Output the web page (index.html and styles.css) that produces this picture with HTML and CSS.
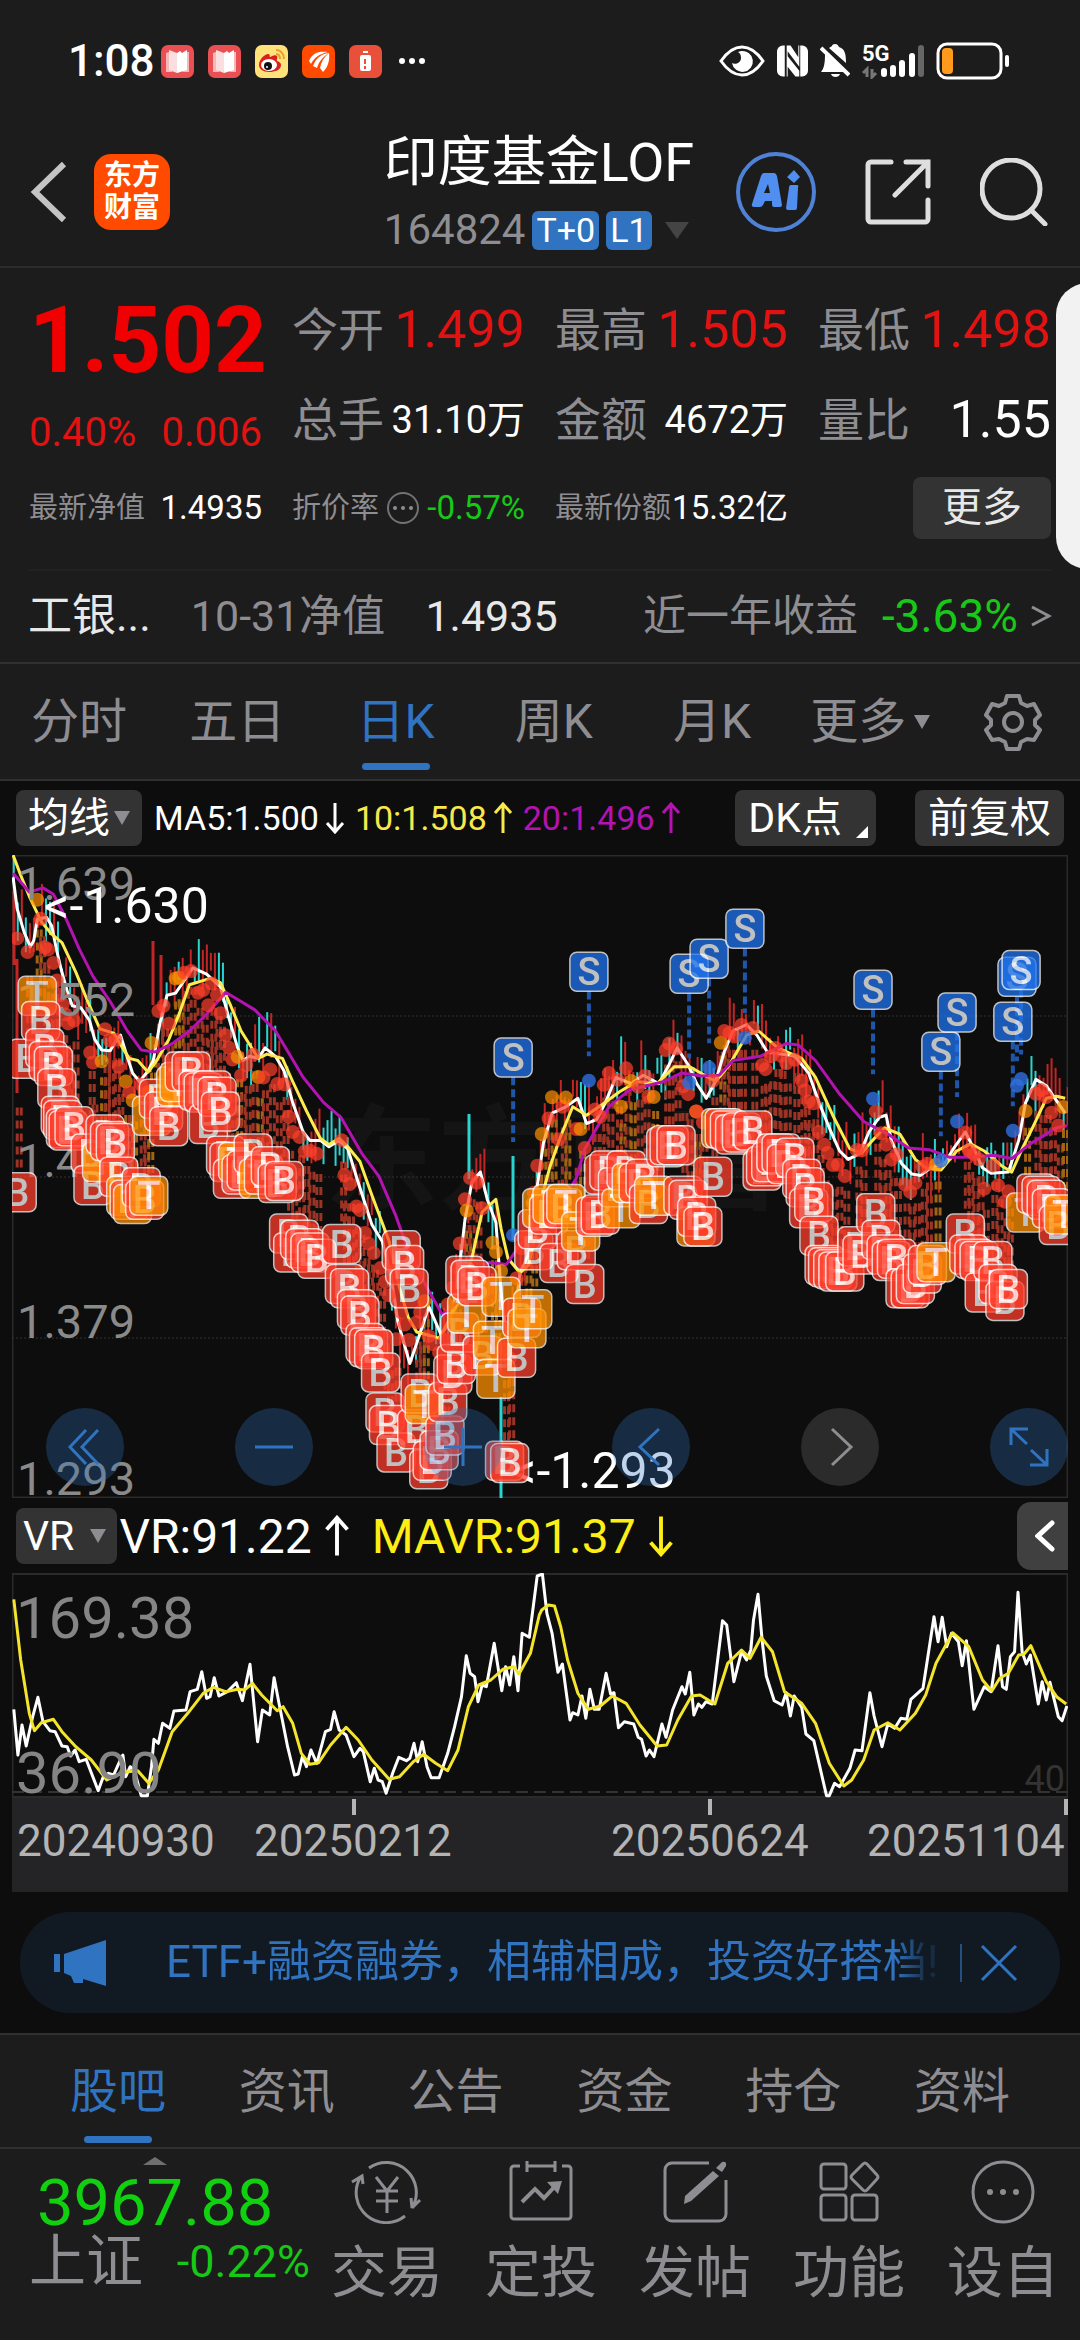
FILE: index.html
```html
<!DOCTYPE html>
<html lang="zh-CN">
  <head>
    <meta charset="UTF-8" />
    <meta name="viewport" content="width=device-width, initial-scale=1.0" />
    <title>印度基金LOF 164824</title>
    <link rel="stylesheet" href="styles.css">
  </head>
  <body>
    <!-- Shared arrows -->
    <svg class="sprite" aria-hidden="true">
      <symbol id="arrow-up" viewBox="0 0 20 32"><path d="M10 31V2M2 11l8-9 8 9" fill="none" stroke="currentColor" stroke-width="3" /></symbol>
      <symbol id="arrow-down" viewBox="0 0 20 32"><path d="M10 1v29M2 21l8 9 8-9" fill="none" stroke="currentColor" stroke-width="3" /></symbol>
      <symbol id="book" viewBox="0 0 33 33"><rect width="33" height="33" rx="7" fill="#ea4f54" /><path d="M5 8l6-2v21H5zM22 7h6v20h-6z" fill="#f8b8ba" /><path d="M8 5l8 3v20l-8-3z" fill="#fbdfe0" /><path d="M16 8l3-2 2 2 5-3v20l-10 3z" fill="#fff" /></symbol>
    </svg>

    <div class="status">
      <span class="time">1:08</span>
      <svg class="app"><use href="#book" /></svg>
      <svg class="app"><use href="#book" /></svg>
      <svg class="app" viewBox="0 0 33 33"><rect width="33" height="33" rx="7" fill="#ffe37a" /><path d="M4 20c0-6 6-11 9-11 3 0 1 3 2 3s5-3 7-1c1 2-1 4 0 5 3 1 4 2 4 4 0 5-6 7-12 7-6 0-10-3-10-7z" fill="#d9201f" /><ellipse cx="14" cy="20" rx="8" ry="6" fill="#fff" /><circle cx="13" cy="21" r="4" fill="#111" /><circle cx="12" cy="22" r="1" fill="#fff" /><path d="M21 5c5 0 8 4 8 9M21 9c3 0 4 2 4 5" fill="none" stroke="#e8a02c" stroke-width="2" /></svg>
      <svg class="app" viewBox="0 0 33 33"><rect width="33" height="33" rx="7" fill="#ff4a00" /><path d="M7 16C11 7 17 6 26 7 17 9 12 13 9 19zM11 21C14 13 19 9 27 8c-6 4-10 8-12 15zM18 23c1-6 4-11 9-15 1 7-1 14-6 19z" fill="#fff" /></svg>
      <svg class="app" viewBox="0 0 33 33"><rect width="33" height="33" rx="7" fill="#e8503a" /><path d="M14 6h5v2h-5zM13 10h7a2 2 0 0 1 2 2v12a2 2 0 0 1-2 2h-7a2 2 0 0 1-2-2V12a2 2 0 0 1 2-2z" fill="#fff" /><path d="M16 14v5M16 21v3" stroke="#e8503a" stroke-width="2" /></svg>
      <svg class="dots" viewBox="0 0 28 8"><circle cx="4" cy="4" r="3" /><circle cx="14" cy="4" r="3" /><circle cx="24" cy="4" r="3" /></svg>
      <span class="spacer"></span>
      <div class="status-right">
        <svg class="eye" viewBox="0 0 46 32"><path d="M2 16C9 6 16 2 23 2s14 4 21 14C37 26 30 30 23 30S9 26 2 16z" fill="none" stroke="#fff" stroke-width="3" /><path d="M22 6a10.500 10.500 0 1 1-9 12c3 2 9 0 9-5 0-3-1-5-3-6z" fill="#fff" /></svg>
        <svg class="nfc" viewBox="0 0 32 32"><path d="M6 0h2v32H6a6 6 0 0 1-6-6V6a6 6 0 0 1 6-6zM26 0a6 6 0 0 1 6 6v20a6 6 0 0 1-6 6h-2V0zM10 0h4l8 12V0h1v22L11 6v5l12 15v6h-4l-8-10v10h-1z" fill="#fff" /></svg>
        <svg class="bell" viewBox="0 0 30 34"><path d="M15 0c2 0 3 1 4 3 6 2 7 7 7 16L9 4c1-1 2-1 3-2 0-1 1-2 3-2zM5 10l19 18H1c3-4 4-8 4-18zM11 30h9c-1 4-8 4-9 0z" fill="#fff" /><path d="M1 4l28 27" stroke="#fff" stroke-width="4" /></svg>
        <span class="signal">
          <span class="net">5G</span>
          <svg viewBox="0 0 62 35"><path d="M1 29l4-4v8M10 25v8l4-4" stroke="#777" stroke-width="3" fill="none" /><g stroke="#fff" stroke-width="6" stroke-linecap="round"><path d="M22 27v3M31 24v6M40 19v11M50 12v18" /><path d="M59 4v26" stroke="#666" /></g></svg>
        </span>
        <svg class="battery" viewBox="0 0 74 38"><rect x="2" y="2" width="63" height="34" rx="9" fill="none" stroke="#fff" stroke-width="3" /><rect x="6" y="6" width="11" height="26" rx="4" fill="#ff9a1c" /><path d="M71 15v8" stroke="#fff" stroke-width="4" stroke-linecap="round" /></svg>
      </div>
    </div>

    <header class="top">
      <div class="top-left">
        <button class="icon-btn" aria-label="返回"><svg class="back" viewBox="0 0 38 64"><path d="M34 4L5 32l29 28" fill="none" stroke="#c4c4c4" stroke-width="6" /></svg></button>
        <a class="logo" href="#">东方<br>财富</a>
      </div>
      <div class="name">
        <h1>印度基金LOF</h1>
        <div class="code">164824<span class="tag">T+0</span><span class="tag">L1</span><i class="caret"></i></div>
      </div>
      <div class="top-right">
        <button class="icon-btn" aria-label="AI"><svg class="i-ai" viewBox="0 0 80 80"><circle cx="40" cy="40" r="38" fill="none" stroke="#4f82d6" stroke-width="4" /><path fill-rule="evenodd" d="M28 21h10q2 0 3 3l5 29q0 2-2 2h-6q-2 0-2-3v-3h-7l-2 4q-1 2-3 2h-6q-3 0-2-3l9-28q1-3 3-3zm4 11l-4 9h6zM55 33h6q2 0 1 3l-1 20q0 2-2 2h-7q-2 0-2-2l3-20q0-3 2-3zM58 18l6 7-6 6-7-6z" fill="#508ef0" /></svg></button>
        <button class="icon-btn" aria-label="分享"><svg class="i-share" viewBox="0 0 66 66"><path d="M26 3H6a3 3 0 0 0-3 3v54a3 3 0 0 0 3 3h54a3 3 0 0 0 3-3V41M41 3h22v24M63 3L30 36" fill="none" stroke="#dedede" stroke-width="5" stroke-linecap="round" /></svg></button>
        <button class="icon-btn" aria-label="搜索"><svg class="i-search" viewBox="0 0 68 68"><circle cx="31" cy="31" r="29" fill="none" stroke="#dedede" stroke-width="5" /><path d="M51 52l14 14" stroke="#dedede" stroke-width="5" stroke-linecap="round" /></svg></button>
      </div>
    </header>

    <section class="quote">
      <div class="quote-grid">
        <div class="main-price">
          <strong>1.502</strong>
          <div class="pair change"><span>0.40%</span><span>0.006</span></div>
        </div>
        <div class="stats">
          <div class="pair"><span>今开</span><b class="red">1.499</b></div>
          <div class="pair"><span>总手</span><b class="mid">31.10万</b></div>
        </div>
        <div class="stats">
          <div class="pair"><span>最高</span><b class="red">1.505</b></div>
          <div class="pair"><span>金额</span><b class="mid">4672万</b></div>
        </div>
        <div class="stats">
          <div class="pair"><span>最低</span><b class="red">1.498</b></div>
          <div class="pair"><span>量比</span><b>1.55</b></div>
        </div>
        <div class="pair small"><span>最新净值</span><b>1.4935</b></div>
        <div class="pair small"><span>折价率</span><svg class="info" viewBox="0 0 34 34"><circle cx="17" cy="17" r="15" fill="none" stroke="#727176" stroke-width="2" /><g fill="#8e8d92"><circle cx="9" cy="17" r="2" /><circle cx="17" cy="17" r="2" /><circle cx="25" cy="17" r="2" /></g></svg><b class="green">-0.57%</b></div>
        <div class="pair small"><span>最新份额</span><b>15.32亿</b></div>
        <button class="more">更多</button>
      </div>
      <a class="fund" href="#">
        <span class="light">工银...</span>
        <span class="fund-date">10-31净值</span>
        <span class="light">1.4935</span>
        <span class="fund-year">近一年收益</span>
        <span class="fund-rate green">-3.63%</span>
        <svg class="gt" viewBox="0 0 22 22"><path d="M2 2l17 9-17 9" fill="none" stroke="#8e8d92" stroke-width="3" /></svg>
      </a>
      <button class="drawer" aria-label="展开"></button>
    </section>

    <nav class="tabs period">
      <button>分时</button>
      <button>五日</button>
      <button class="active">日K</button>
      <button>周K</button>
      <button>月K</button>
      <button>更多<i class="caret"></i></button>
      <button aria-label="设置"><svg class="gear" viewBox="0 0 58 58"><path d="M23 3h12l2 7 6 3 7-2 6 11-5 5v5l5 5-6 10-7-1-6 3-2 7H23l-2-7-6-3-7 1-6-10 5-5v-5l-5-5L8 11l7 2 6-3z" fill="none" stroke="#8e8d92" stroke-width="4" stroke-linejoin="round" /><circle cx="29" cy="29" r="9" fill="none" stroke="#8e8d92" stroke-width="4" /></svg></button>
    </nav>

    <main class="charts">
      <div class="legend">
        <button class="chip">均线<i class="caret"></i></button>
        <span class="ma">MA5:1.500<svg><use href="#arrow-down" /></svg></span>
        <span class="ma ma10">10:1.508<svg><use href="#arrow-up" /></svg></span>
        <span class="ma ma20">20:1.496<svg><use href="#arrow-up" /></svg></span>
        <span class="spacer"></span>
        <button class="chip dk">DK点<i class="corner"></i></button>
        <button class="chip">前复权</button>
      </div>

      <div class="kline">
        <svg id="kline" viewBox="0 0 1056 643" role="img" aria-label="日K"></svg>
        <div class="chart-tools">
          <button aria-label="最早"><svg viewBox="0 0 40 40"><path d="M21 3L5 20l16 17M33 3L17 20l16 17" /></svg></button>
          <button aria-label="缩小"><svg viewBox="0 0 40 40"><path d="M1 20h38" /></svg></button>
          <button aria-label="放大"><svg viewBox="0 0 40 40"><path d="M1 20h38M20 1v38" /></svg></button>
          <button aria-label="向左"><svg viewBox="0 0 40 40"><path d="M28 2L9 20l19 18" /></svg></button>
          <button class="off" aria-label="向右"><svg viewBox="0 0 40 40"><path d="M12 2l19 18-19 18" /></svg></button>
          <button aria-label="全屏"><svg viewBox="0 0 40 40"><path d="M2 18V2h17M2 2l16 15M38 22v16H21M38 38L22 23" /></svg></button>
        </div>
      </div>

      <div class="legend vr-legend">
        <button class="chip vr-chip">VR<i class="caret"></i></button>
        <span class="vr">VR:91.22<svg><use href="#arrow-up" /></svg></span>
        <span class="vr mavr">MAVR:91.37<svg><use href="#arrow-down" /></svg></span>
        <span class="spacer"></span>
        <button class="collapse" aria-label="收起"><svg viewBox="0 0 20 32"><path d="M17 3L3 16l14 13" fill="none" stroke="#fff" stroke-width="5" stroke-linecap="round" /></svg></button>
      </div>
      <svg id="vr" viewBox="0 0 1056 225" role="img" aria-label="VR"></svg>
      <svg id="dates" viewBox="0 0 1056 94" role="img" aria-label="日期"></svg>

      <div class="notice">
        <svg class="horn" viewBox="0 0 52 46"><path d="M0 14h6v18H0zM10 14L52 0v46l-23-7v4h-9l-3-7-7-3z" fill="#3073c0" /></svg>
        <a href="#">ETF+融资融券，相辅相成，投资好搭档!</a>
        <button class="close" aria-label="关闭"><svg viewBox="0 0 38 38"><path d="M2 2l34 34M36 2L2 36" stroke="#3073c0" stroke-width="3" /></svg></button>
      </div>
    </main>

    <nav class="tabs info-tabs">
      <button class="active">股吧</button>
      <button>资讯</button>
      <button>公告</button>
      <button>资金</button>
      <button>持仓</button>
      <button>资料</button>
    </nav>

    <footer class="bottom">
      <a class="index" href="#">
        <i class="caret up"></i>
        <strong>3967.88</strong>
        <span class="index-row"><span>上证</span><em>-0.22%</em></span>
      </a>
      <button><svg viewBox="0 0 72 64"><g fill="none" stroke="#8e8d92" stroke-width="3"><path d="M18 8a30 30 0 0 1 43 40M61 48l8-8M61 48l-1-10M54 56A30 30 0 0 1 9 18M1 22l10-6 1 8" /><path d="M25 17l11 14 11-14M36 31v22M25 31h22M25 41h22" /></g></svg>交易</button>
      <button><svg viewBox="0 0 72 64"><g fill="none" stroke="#8e8d92" stroke-width="3"><path d="M15 6H9a3 3 0 0 0-3 3v47a3 3 0 0 0 3 3h54a3 3 0 0 0 3-3V9a3 3 0 0 0-3-3h-6M22 1v11M50 1v11M22 6h28" /><path d="M17 42l13-13 9 9 13-14" stroke-width="4" /></g><path d="M42 22l15-1-4 13z" fill="#8e8d92" /></svg>定投</button>
      <button><svg viewBox="0 0 72 64"><path d="M50 3H13a7 7 0 0 0-7 7v44a7 7 0 0 0 7 7h47a7 7 0 0 0 7-7V20" fill="none" stroke="#8e8d92" stroke-width="3" /><path d="M54 11l6 5-28 25-7 3 1-8zM57 8l6-6q5-1 4 4l-4 6z" fill="#8e8d92" /></svg>发帖</button>
      <button><svg viewBox="0 0 72 64"><g fill="none" stroke="#8e8d92" stroke-width="3"><rect x="8" y="4" width="25" height="25" rx="3" /><rect x="8" y="35" width="25" height="25" rx="3" /><rect x="39" y="35" width="25" height="25" rx="3" /><path d="M50 4q2-2 4 0l10 11q2 2 0 4L54 30q-2 2-4 0L39 19q-2-2 0-4z" /></g></svg>功能</button>
      <button><svg viewBox="0 0 72 64"><circle cx="36" cy="32" r="30" fill="none" stroke="#8e8d92" stroke-width="3" /><g fill="#8e8d92"><circle cx="23" cy="32" r="3" /><circle cx="36" cy="32" r="3" /><circle cx="49" cy="32" r="3" /></g></svg>设自</button>
    </footer>

    <script src="chart.js"></script>
  </body>
</html>
```
FILE: styles.css
```css
* {
  margin: 0;
  padding: 0;
  box-sizing: border-box;
}

body {
  background-color: #1c1c1c;
  color: #8e8d92;
  font-family: Roboto, "Noto Sans CJK SC", sans-serif;
  font-weight: 400;
  overflow-x: hidden;
}

button {
  background: none;
  border: none;
  color: inherit;
  font: inherit;
  cursor: pointer;
}

a {
  color: inherit;
  text-decoration: none;
}

b,
em,
i {
  font-weight: 400;
  font-style: normal;
}

svg {
  display: block;
  flex: none;
}

.sprite {
  position: absolute;
  width: 0;
  height: 0;
}

.spacer {
  flex: 1;
}

.red {
  color: #e01212;
}

.green {
  color: #17c817;
}

.caret {
  display: inline-block;
  border: 8px solid transparent;
  border-top: 14px solid currentColor;
  border-bottom: none;
}

/* status bar */
.status {
  display: flex;
  align-items: center;
  gap: 14px;
  padding: 38px 70px 20px 68px;
  line-height: 46px;
  color: #fff;
}

.status-right {
  display: flex;
  align-items: center;
  gap: 12px;
}

.time {
  font-size: 44px;
  font-weight: 500;
  margin-right: -8px;
}

.app {
  width: 33px;
  height: 33px;
}

.dots {
  width: 28px;
  height: 8px;
  margin-left: 2px;
  fill: #fff;
}

.eye {
  width: 46px;
  height: 32px;
}

.nfc {
  width: 31px;
  height: 32px;
}

.bell {
  width: 30px;
  height: 34px;
}

.signal {
  position: relative;
}

.signal svg {
  width: 62px;
  height: 35px;
}

.net {
  position: absolute;
  top: 0;
  left: 0;
  font-size: 22px;
  font-weight: 700;
  line-height: 20px;
}

.battery {
  width: 74px;
  height: 38px;
}

/* title bar */
.top {
  display: grid;
  grid-template-columns: 1fr auto 1fr;
  align-items: center;
  padding: 26px 32px 12px 30px;
  border-bottom: 2px solid #2c2c2c;
}

.top-left,
.top-right {
  display: flex;
  align-items: center;
}

.top-left {
  gap: 26px;
}

.top-right {
  justify-content: flex-end;
  gap: 49px;
}

.back {
  width: 38px;
  height: 64px;
}

.logo {
  width: 76px;
  height: 76px;
  padding-top: 6px;
  border-radius: 17px;
  background-color: #ff4a00;
  color: #fff;
  font-size: 28px;
  font-weight: 700;
  line-height: 32px;
  text-align: center;
}

.name h1 {
  color: #fff;
  font-size: 54px;
  font-weight: 400;
  line-height: 66px;
}

.code {
  display: flex;
  align-items: center;
  gap: 7px;
  margin-top: 10px;
  font-size: 42px;
  line-height: 48px;
}

.tag {
  padding: 0 4px;
  border-radius: 6px;
  background-color: #3073c0;
  color: #fff;
  font-size: 34px;
  line-height: 39px;
}

.code .caret {
  margin-left: 6px;
  border-width: 17px 12px 0;
  color: #444;
}

.i-ai {
  width: 80px;
  height: 80px;
}

.i-share {
  width: 66px;
  height: 66px;
}

.i-search {
  width: 68px;
  height: 68px;
}

/* quote */
.quote {
  position: relative;
}

.quote-grid {
  display: grid;
  grid-template-columns: repeat(4, minmax(0, 1fr));
  column-gap: 30px;
  row-gap: 20px;
  align-items: center;
  padding: 25px 29px 30px;
}

.main-price strong {
  display: block;
  color: #f00000;
  font-size: 92px;
  font-weight: 700;
  line-height: 96px;
}

.pair {
  display: flex;
  align-items: center;
  justify-content: space-between;
  white-space: nowrap;
}

.change {
  margin-top: 20px;
  color: #e01212;
  font-size: 40px;
  line-height: 48px;
}

.stats {
  display: flex;
  flex-direction: column;
  gap: 30px;
}

.stats .pair {
  font-size: 46px;
  line-height: 60px;
}

.stats b {
  color: #fff;
  font-size: 52px;
}

.stats .red {
  color: #e01212;
}

.stats .mid {
  font-size: 38px;
}

.small {
  font-size: 29px;
  line-height: 62px;
}

.small b {
  color: #fff;
  font-size: 33px;
}

.small .green {
  color: #17c817;
}

.info {
  width: 34px;
  height: 34px;
}

.more {
  justify-self: end;
  width: 138px;
  border-radius: 8px;
  background-color: #333;
  color: #e8e8e8;
  font-size: 40px;
  line-height: 62px;
}

.fund {
  display: flex;
  align-items: center;
  margin: 0 28px;
  padding: 15px 0 16px;
  border-top: 2px solid #222;
  font-size: 43px;
  line-height: 60px;
}

.light {
  color: #e8e8e8;
}

.light:first-child {
  font-size: 44px;
}

.fund-date {
  margin: 0 40px;
}

.fund-year {
  margin: 0 24px 0 auto;
}

.fund-rate {
  font-size: 46px;
}

.gt {
  width: 22px;
  height: 22px;
  margin-left: 12px;
}

.drawer {
  position: absolute;
  top: 15px;
  right: -40px;
  width: 64px;
  height: 286px;
  border-radius: 36px;
  background-color: #f2f2f2;
}

/* tabs */
.tabs {
  display: flex;
  justify-content: space-between;
  border-top: 2px solid #303030;
  border-bottom: 2px solid #303030;
  font-size: 48px;
  line-height: 68px;
}

.tabs button {
  display: flex;
  align-items: center;
  justify-content: center;
  padding: 24px 0 23px;
}

.tabs .caret {
  margin-left: 8px;
}

.tabs .active {
  position: relative;
  color: #3073c0;
}

.tabs .active::after {
  content: "";
  position: absolute;
  bottom: 9px;
  left: 50%;
  width: 68px;
  height: 7px;
  margin-left: -34px;
  border-radius: 4px;
  background-color: #3073c0;
}

.period {
  display: grid;
  grid-template-columns: repeat(6, 5fr) 4fr;
  padding-right: 4px;
}

.gear {
  width: 58px;
  height: 58px;
}

.info-tabs {
  padding: 0 70px;
}

.info-tabs button {
  padding: 23px 0 21px;
}

.info-tabs .active::after {
  bottom: 4px;
}

/* charts */
.charts {
  padding: 9px 12px 20px;
  background-color: #0d0d0d;
}

.legend {
  display: flex;
  align-items: center;
  padding: 0 4px 9px;
  color: #fff;
}

.chip {
  display: flex;
  align-items: center;
  padding: 0 13px;
  border-radius: 8px;
  background-color: #333;
  color: #fff;
  font-size: 41px;
  line-height: 56px;
}

.chip .caret {
  color: #8e8d92;
}

.legend .chip:first-child {
  gap: 4px;
  padding: 0 12px;
}

.ma {
  display: flex;
  align-items: center;
  gap: 6px;
  margin-left: 12px;
  font-size: 34px;
}

.ma svg {
  width: 20px;
  height: 32px;
}

.ma10 {
  margin-left: 10px;
  color: #f8e84c;
}

.ma20 {
  margin-left: 10px;
  color: #b313b0;
}

.dk {
  position: relative;
  padding-right: 34px;
  margin-right: 39px;
}

.corner {
  position: absolute;
  right: 8px;
  bottom: 8px;
  border-left: 12px solid transparent;
  border-bottom: 12px solid #fff;
}

.kline {
  position: relative;
}

#kline,
#vr,
#dates {
  width: 100%;
  height: auto;
}

.axis {
  fill: #8a8a8a;
  font-size: 47px;
}

.mark {
  fill: #fff;
  font-size: 50px;
}

.badge text {
  fill: #fff;
  font-size: 38px;
  font-weight: 500;
  text-anchor: middle;
}

.watermark {
  fill: #141414;
  font-size: 114px;
  font-weight: 700;
}

.vr-axis {
  fill: #858585;
  font-size: 58px;
}

.level {
  fill: #333;
  font-size: 36px;
  text-anchor: end;
}

.date {
  fill: #b4b4b4;
  font-size: 44px;
}

.chart-tools {
  position: absolute;
  right: 0;
  bottom: 12px;
  left: 34px;
  display: flex;
  justify-content: space-between;
}

.chart-tools button {
  width: 78px;
  height: 78px;
  padding: 19px;
  border-radius: 50%;
  background-color: rgba(48, 115, 192, 0.3);
}

.chart-tools svg {
  width: 40px;
  height: 40px;
  fill: none;
  stroke: #3073c0;
  stroke-width: 3;
}

.chart-tools .off {
  background-color: #2b2b2b;
}

.chart-tools .off svg {
  stroke: #8e8d92;
}

.vr-legend {
  padding: 4px 0 3px 4px;
}

.vr-legend .chip:first-child {
  gap: 16px;
  padding: 0 11px 0 7px;
}

.vr {
  display: flex;
  align-items: center;
  gap: 12px;
  margin-left: 2px;
  font-size: 48px;
}

.vr svg {
  width: 26px;
  height: 42px;
}

.mavr {
  margin-left: 22px;
  color: #fdee16;
}

.collapse {
  padding: 18px 13px 18px 18px;
  border-radius: 14px 0 0 14px;
  background-color: #404040;
}

.collapse svg {
  width: 20px;
  height: 32px;
}

.notice {
  display: flex;
  align-items: center;
  margin: 20px 8px 0;
  padding: 0 42px 0 34px;
  border-radius: 50px;
  background-color: #111a23;
  color: #3073c0;
  font-size: 44px;
  line-height: 101px;
}

.horn {
  width: 52px;
  height: 46px;
  margin-right: 60px;
}

.notice a {
  flex: 1;
  overflow: hidden;
  white-space: nowrap;
  mask-image: linear-gradient(90deg, #000 94%, rgba(0, 0, 0, 0.2) 98%);
}

.close {
  margin-left: 18px;
  padding-left: 18px;
  border-left: 2px solid #24507f;
}

.close svg {
  width: 38px;
  height: 38px;
}

/* bottom bar */
.bottom {
  display: grid;
  grid-template-columns: 310px repeat(5, 1fr);
  padding-bottom: 18px;
}

.bottom button {
  display: flex;
  flex-direction: column;
  align-items: center;
  padding-top: 11px;
  font-size: 56px;
  line-height: 98px;
}

.bottom button svg {
  width: 72px;
  height: 64px;
}

.index {
  display: flex;
  flex-direction: column;
  padding-top: 8px;
}

.caret.up {
  align-self: center;
  border: 12px solid transparent;
  border-top: none;
  border-bottom: 8px solid #6f6f6f;
}

.index strong {
  padding-left: 37px;
  color: #10d010;
  font-size: 65px;
  font-weight: 400;
  line-height: 76px;
}

.index-row {
  display: flex;
  justify-content: space-between;
  padding-left: 29px;
  font-size: 57px;
  line-height: 42px;
}

.index em {
  color: #17c817;
  font-size: 45px;
}
```
FILE: chart.js
```js
// Series are stored as flat "x,y" pairs on two side by side tiles,
// TILE units wide each; the second half starts again from 0.
const TILE = 1568;
const NS = "http://www.w3.org/2000/svg";

const parse = (text, offset) =>
  text.trim().split(/\s+/).map((pair) => {
    const [x, y] = pair.split(",").map(Number);
    return [x + offset, y];
  });
const series = (first, second) => [...parse(first, 0), ...parse(second, TILE)];

const ma5 = series(
  `38,65 50,140 70,195 88,230 98,215 108,165 135,160 150,180 165,240 178,285 195,335 210,370 235,375 260,405 275,450 295,475
   320,477 335,455 350,440 365,480 385,530 405,550 430,525 445,500 465,410 485,345 510,340 535,310 560,280 600,295 640,325
   665,400 690,470 705,500 725,490 750,495 770,470 800,490 825,525 850,600 880,670 900,690 930,690 955,705 985,690 1010,710
   1040,790 1080,890 1110,930 1135,1010 1155,1120 1190,1220 1215,1160 1245,1085 1280,1150 1300,1130 1315,1090 1330,1020
   1350,880 1370,790 1395,765 1415,830 1440,885 1455,1050 1470,1150 1490,1130 1510,1005 1535,960 1560,800`,
  `10,696 35,625 75,610 110,590 135,650 165,640 190,600 220,540 265,555 300,535 345,555 375,510 398,470 430,510 455,555
   483,590 510,550 535,480 560,430 600,415 630,440 660,480 700,485 740,490 780,530 810,600 840,660 870,715 895,735 930,720
   955,670 985,635 1005,630 1020,690 1050,745 1080,770 1105,773 1135,755 1175,745 1200,710 1235,670 1260,710 1285,755
   1310,768 1360,765 1390,690 1410,600 1440,545 1470,560 1495,590 1525,625`
);
const ma10 = series(
  `38,12 60,60 85,110 120,170 150,200 180,220 220,290 260,370 290,425 330,435 375,495 400,500 430,528 455,500 490,450
   520,390 550,320 610,305 640,315 670,370 700,430 750,495 775,485 820,495 850,550 890,620 930,685 955,700 985,685 1010,705
   1045,740 1080,820 1130,930 1160,1040 1185,1110 1210,1145 1275,1160 1295,1130 1340,1060 1370,970 1400,860 1440,830
   1455,900 1475,970 1510,1005 1535,985 1560,900`,
  `10,810 30,750 60,680 95,610 135,630 180,605 230,575 280,550 340,555 390,515 435,515 510,550 550,510 600,440 635,430
   690,470 760,495 800,540 850,630 900,710 935,720 960,695 1000,660 1045,675 1090,735 1120,755 1165,760 1210,715 1250,698
   1290,715 1340,750 1370,765 1400,710 1430,660 1470,590 1500,585 1525,590`
);
const ma20 = series(
  `38,55 85,100 125,90 155,105 190,160 230,235 270,300 320,360 370,430 410,475 450,480 500,460 550,430 600,390 655,338
   700,360 740,380 800,430 840,485 880,540 940,600 990,635 1050,720 1100,775 1150,870 1180,940 1240,1040 1285,1105
   1320,1080 1380,1000 1420,980 1470,985 1500,950 1540,900`,
  `10,880 70,830 105,780 130,710 200,610 260,570 310,560 360,550 410,530 470,537 520,535 560,500 640,490 715,460 750,463
   800,500 870,580 940,645 1010,675 1070,708 1130,712 1190,730 1250,730 1320,725 1370,733 1420,700 1500,660 1530,655`
);

// Buy / T signals in drawing order
const buys = series(
  `50,812 80,495 118,405 130,470 140,500 155,512 165,565 175,630 182,640 190,660 198,665 215,655 262,720 270,795 305,675
   318,690 335,695 345,775 375,830 410,800 420,830 460,590 475,620 490,655 535,525 555,525 605,650 575,570 590,575 615,570
   630,585 640,620 655,725 665,740 675,780 700,770 715,760 735,720 765,770 785,750 805,790 825,785 838,910 850,955 870,925
   885,945 900,955 920,970 992,935 1000,1030 1015,1040 1035,1090 1045,1105 1060,1170 1070,1180 1085,1185 1105,1240
   1118,1335 1128,1365 1150,1430 1165,950 1175,985 1188,1040 1210,1375 1220,1290 1245,1470 1255,1450 1275,1425 1292,1390
   1300,1310 1315,1245 1325,1220 1335,1145 1350,1010 1365,1020 1385,1035 1400,1200 1465,1450 1480,1455 1500,1205 1515,1110
   1550,950 1560,900`,
  `25,865 55,980 105,950 130,1030 65,850 160,870 175,865 185,770 200,760 225,800 250,760 285,790 305,780 315,840 365,705
   375,700 395,700 415,820 430,830 455,870 502,775 535,660 550,665 565,675 585,670 618,665 645,760 655,750 670,740 685,720
   700,720 715,745 740,730 760,780 770,800 780,850 795,835 810,915 825,985 835,990 850,995 865,1000 885,1000 920,940
   935,960 975,862 990,925 1005,960 1020,975 1035,970 1060,1040 1075,1040 1090,1030 1110,1005 1125,985 1235,910 1245,960
   1260,970 1275,975 1290,1050 1315,975 1330,1030 1350,1070 1360,1042 1440,815 1455,820 1470,830 1485,850 1505,890`
);
const trades = series(
  `108,345 295,740 365,820 385,840 432,820 440,630 510,560 520,550 690,740 750,780 1232,1315 1355,1100 1430,1165
   1440,1255 1455,1060 1530,1135 1547,1090`,
  `5,850 35,840 75,840 118,905 235,850 265,790 330,820 453,893 525,660 1150,978 1410,860 1520,865`
);
const topBuys = parse("473,893", TILE);
const sells = series("1490,492", "142,288 433,293 491,257 595,186 967,331 1164,478 1211,385 1373,407 1385,300 1397,284");

const vr = series(
  `40,628 52,765 64,675 76,738 95,650 110,592 125,665 145,692 160,695 180,738 195,740 205,768 218,750 230,785 250,778
   285,872 300,830 315,820 330,825 345,790 357,765 365,830 378,800 390,810 410,887 428,887 440,800 447,718 460,730 472,670
   493,685 505,633 540,630 552,575 573,568 586,515 600,595 610,590 622,533 636,588 660,575 686,548 704,602 726,493 748,725
   762,630 783,645 796,533 810,610 835,740 855,825 866,822 878,770 890,800 903,750 920,790 945,695 960,688 970,635 985,690
   1005,705 1028,770 1045,745 1055,755 1075,845 1087,805 1098,840 1110,845 1121,880 1140,820 1158,772 1180,782 1190,775
   1202,730 1213,785 1226,725 1240,800 1252,833 1275,833 1300,760 1320,680 1340,590 1354,467 1365,520 1378,530 1388,605
   1400,555 1412,560 1435,430 1457,572 1468,500 1480,555 1492,470 1504,572 1516,400 1537,412 1560,228`,
  `7,222 20,340 35,400 52,517 65,492 87,660 95,638 110,645 122,588 133,655 145,568 158,628 172,628 192,520 205,582 215,578
   228,683 245,665 272,672 285,712 295,718 308,768 318,750 331,770 354,672 366,712 385,630 412,560 422,582 435,517 447,645
   460,612 470,622 482,605 500,612 530,362 542,375 563,545 585,455 600,480 612,450 620,360 633,283 645,420 657,528 680,602
   703,615 715,578 727,648 738,588 760,622 772,702 795,722 832,887 840,887 855,850 870,860 900,805 915,750 935,752 958,578
   970,648 993,740 1010,672 1030,685 1048,655 1065,658 1077,598 1112,565 1144,350 1156,425 1168,352 1181,440 1195,400
   1215,425 1226,497 1238,422 1260,628 1290,560 1310,575 1330,437 1343,560 1354,568 1366,470 1378,455 1388,277 1400,455
   1412,492 1424,465 1447,612 1458,545 1470,600 1481,547 1505,650 1516,662 1530,618`
);
const mavr = series(
  `40,298 60,480 85,640 100,692 120,668 155,658 180,695 220,740 265,780 310,840 340,825 370,815 400,812 432,850 460,810
   500,695 545,640 590,580 620,562 655,575 690,568 710,570 733,550 760,585 805,632 822,620 850,670 875,760 900,793 925,788
   960,735 1005,682 1040,720 1080,780 1130,838 1160,830 1200,785 1230,763 1265,790 1300,812 1330,750 1360,620 1390,555
   1425,540 1460,508 1492,500 1507,522 1540,460 1566,345`,
  `5,330 25,315 42,318 60,380 80,480 110,580 140,628 175,618 210,588 250,610 290,675 340,738 368,735 400,660 440,588
   465,585 508,612 545,490 585,450 610,475 642,412 675,455 710,575 760,610 800,670 840,790 882,858 905,840 940,780 970,690
   1010,668 1045,690 1090,640 1120,585 1150,490 1198,398 1245,440 1285,540 1312,573 1335,535 1360,520 1390,465 1405,463
   1425,437 1470,545 1500,590 1528,612`
);

const toX = (x) => x * (540 / TILE) - 12;
const toY = (y) => y * (660 / TILE) - 5;
const toVrY = (y) => y / 3 - 73;

function add(parent, tag, attrs, text) {
  const el = document.createElementNS(NS, tag);
  Object.entries(attrs).forEach(([key, value]) => el.setAttribute(key, value));
  if (text) el.textContent = text;
  parent.appendChild(el);
  return el;
}

function addLine(parent, points, scaleY, color) {
  add(parent, "polyline", {
    points: points.map(([x, y]) => `${toX(x).toFixed(1)},${scaleY(y).toFixed(1)}`).join(" "),
    fill: "none",
    stroke: color,
    "stroke-width": 3,
    "stroke-linejoin": "round",
  });
}

// Value of a series between two stored points
function valueAt(points, x) {
  const i = points.findIndex((p) => p[0] >= x);
  if (i <= 0) return points[i < 0 ? points.length - 1 : 0][1];
  const [x0, y0] = points[i - 1];
  const [x1, y1] = points[i];
  return y0 + ((y1 - y0) * (x - x0)) / (x1 - x0);
}

// Repeatable spread so the bars look the same on each load
const spread = (i) => Math.abs(Math.sin(i * 12.9898) * 43758.5453) % 1;

function drawBadge(parent, x, y, letter, color) {
  const g = add(parent, "g", { class: "badge", opacity: 0.74 });
  add(g, "rect", { x: x - 19, y: y - 19, width: 38, height: 39, rx: 7, fill: color, stroke: "#fff", "stroke-width": 1.5 });
  add(g, "text", { x, y: y + 14 }, letter);
}

function drawKline() {
  const svg = document.getElementById("kline");
  add(svg, "rect", { x: 0.5, y: 0.5, width: 1055, height: 642, fill: "none", stroke: "#2a2a2a", "stroke-width": 2 });
  add(svg, "text", { x: 312, y: 345, class: "watermark" }, "东方财富");
  [161, 322, 483].forEach((y) =>
    add(svg, "path", { d: `M0 ${y}H1056`, stroke: "#333", "stroke-dasharray": "2 2" })
  );

  // Candles
  for (let i = 0; i < 263; i++) {
    const x = 40 + i * 11.68;
    const mid = valueAt(ma5, x) + (spread(i) - 0.6) * 80;
    const half = 18 + spread(i + 400) * 38;
    const up = spread(i + 900) < 0.6;
    add(svg, "path", {
      d: `M${toX(x)} ${toY(mid - half)}V${toY(mid + half)}`,
      stroke: up ? "#c42424" : "#2ad4d0",
      "stroke-width": 2,
    });
  }
  add(svg, "path", { d: "M501 301V385M489 542V643M457 259V324", stroke: "#2ad4d0", "stroke-width": 3 });
  add(svg, "path", { d: "M2 36V110M5 104V238M141 86V150M149 100V160", stroke: "#c42424", "stroke-width": 3 });

  const signals = [
    ...buys.map((p) => [...p, "B", "#ff3e2b"]),
    ...trades.map((p) => [...p, "T", "#ff9100"]),
  ].sort((a, b) => a[0] - b[0]);
  topBuys.forEach((p) => signals.push([...p, "B", "#ff3e2b"]));

  // Stems hang below the price, dots sit close to the average
  const dotY = (x, y, i) => {
    const price = valueAt(ma5, x);
    const raw = y - 225 - spread(i) * 30;
    return Math.min(Math.max(raw, price - 50), price + 70);
  };
  signals.forEach(([x, y, letter], i) => {
    const top = Math.max(dotY(x, y, i) + 30, y - 200);
    if (top > y - 60) return;
    [0, 11.68].forEach((step) =>
      add(svg, "path", {
        d: `M${toX(x + step)} ${toY(top) + (i % 3) * 2}V${toY(y - 47)}`,
        stroke: letter === "B" ? "#9c3324" : "#a06412",
        "stroke-width": 3,
        "stroke-dasharray": "8 5",
      })
    );
  });

  addLine(svg, ma5, toY, "#fff");
  addLine(svg, ma10, toY, "#fdec50");
  addLine(svg, ma20, toY, "#b313b0");

  signals.forEach(([x, y, letter, color], i) =>
    add(svg, "circle", { cx: toX(x), cy: toY(dotY(x, y, i)), r: 7, fill: color, opacity: 0.7 })
  );
  sells.forEach(([x, y]) => {
    add(svg, "path", {
      d: `M${toX(x)} ${toY(y + 48)}V${toY(y + 202)}`,
      stroke: "#1f56a8",
      "stroke-width": 4,
      "stroke-dasharray": "8 4",
    });
    add(svg, "circle", { cx: toX(x), cy: toY(x < TILE ? 915 : y + 260), r: 7, fill: "#2f6fe0", opacity: 0.8 });
  });

  [["1.639", 45], ["1.552", 161], ["1.466", 322], ["1.379", 483], ["1.293", 640]].forEach(([label, y]) =>
    add(svg, "text", { x: 5, y, class: "axis" }, label)
  );
  add(svg, "text", { x: 32, y: 68, class: "mark" }, "<-1.630");
  add(svg, "text", { x: 499, y: 633, class: "mark" }, "<-1.293");

  signals.forEach(([x, y, letter, color]) => drawBadge(svg, toX(x), toY(y), letter, color));
  sells.forEach(([x, y]) => drawBadge(svg, toX(x), toY(y), "S", "#1f74f0"));
}

function drawVr() {
  const svg = document.getElementById("vr");
  add(svg, "rect", { x: 0.5, y: 1, width: 1055, height: 223, fill: "none", stroke: "#2a2a2a", "stroke-width": 2 });
  add(svg, "path", { d: "M0 219H1056", stroke: "#333", "stroke-width": 2, "stroke-dasharray": "12 6" });
  add(svg, "text", { x: 1053, y: 218, class: "level" }, "40");
  addLine(svg, vr, toVrY, "#fff");
  addLine(svg, mavr, toVrY, "#f4e42c");
  add(svg, "text", { x: 4, y: 65, class: "vr-axis" }, "169.38");
  add(svg, "text", { x: 4, y: 220, class: "vr-axis" }, "36.90");
}

function drawDates() {
  const svg = document.getElementById("dates");
  add(svg, "rect", { width: 1056, height: 94, fill: "#242426" });
  [342, 698, 1054].forEach((x) => add(svg, "path", { d: `M${x} 1V17`, stroke: "#b4b4b4", "stroke-width": 4 }));
  [["20240930", 5], ["20250212", 242], ["20250624", 599], ["20251104", 855]].forEach(([label, x]) =>
    add(svg, "text", { x, y: 58, class: "date" }, label)
  );
}

drawKline();
drawVr();
drawDates();
```
